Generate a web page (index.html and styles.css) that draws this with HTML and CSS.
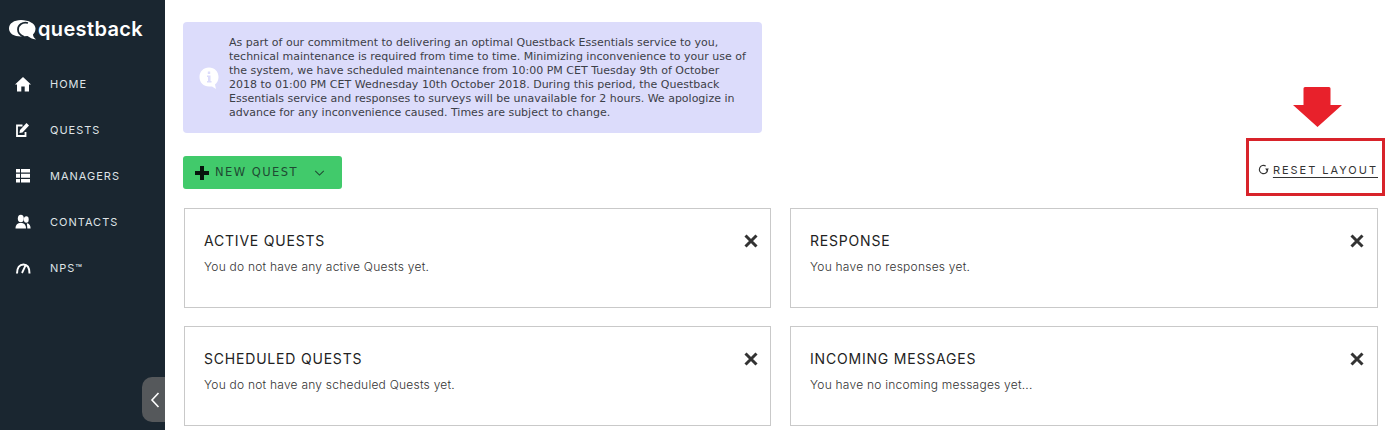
FILE: index.html
```html
<!DOCTYPE html>
<html lang="en">
<head>
<meta charset="utf-8">
<title>Questback</title>
<link rel="stylesheet" href="styles.css">
</head>
<body>
<div class="app">
  <aside class="sidebar">
    <div class="logo">
      <svg class="logo-mark" viewBox="0 0 28 20" width="28" height="20"><path fill="#fff" d="M12 0C5 0 0 3.500 0 8.500 0 13.500 5 16.500 12 16.500 14 16.500 16.500 16.200 18.500 16 20.500 17.500 23.500 19 27 19.500 25 18 24.200 16.500 24 14.500 25.500 13 26.500 11 26.500 8.500 26.500 3.500 19.500 0 12 0Z"/><path fill="none" stroke="#1a2630" stroke-width="1.800" d="M19 3C13.500 1.500 9 5 9 9.500 9 13 11.500 15.500 15 16.800"/></svg>
      <span class="logo-text">questback</span>
    </div>
    <nav class="nav">
      <a class="nav-item"><svg class="nav-icon" viewBox="0 0 16 16"><path fill="#fff" d="M8 1 16 8.500H14V15.500H9.700V10.500H6.300V15.500H2V8.500H0Z"/></svg><span>HOME</span></a>
      <a class="nav-item"><svg class="nav-icon" viewBox="0 0 16 16"><path fill="none" stroke="#fff" stroke-width="1.800" d="M10.500 10V14H2V3.500H7.500"/><path fill="#fff" d="M11.500 1 14 3.500 7.500 10.500 4.500 11 5 8Z"/></svg><span>QUESTS</span></a>
      <a class="nav-item"><svg class="nav-icon" viewBox="0 0 16 16"><path fill="#fff" d="M1 1H5V4.500H1ZM6 1H15V4.500H6ZM1 5.800H5V9.700H1ZM6 5.800H15V9.700H6ZM1 11H5V14.500H1ZM6 11H15V14.500H6Z"/></svg><span>MANAGERS</span></a>
      <a class="nav-item"><svg class="nav-icon" viewBox="0 0 16 16"><ellipse fill="#fff" cx="5.800" cy="4.500" rx="3" ry="3.800"/><path fill="#fff" d="M.5 14.500C.5 10.800 2.500 9 5.800 9S11 10.800 11 14.500Z"/><ellipse fill="#fff" cx="11.300" cy="5.500" rx="2.400" ry="3.300"/><path fill="#fff" d="M12.300 14.500H15.600C15.600 11.500 14.500 9.800 12 9.300 11.500 9.800 12.300 11.500 12.300 14.500Z"/></svg><span>CONTACTS</span></a>
      <a class="nav-item"><svg class="nav-icon" viewBox="0 0 16 16"><path fill="none" stroke="#fff" stroke-width="2" d="M2 13.500C2 8 4.500 4.500 8.500 4.500S14.500 8 14.500 13.500"/><path fill="none" stroke="#fff" stroke-width="1.800" d="M7 13 10.500 5.500"/></svg><span>NPS™</span></a>
    </nav>
    <button class="collapse" aria-label="Collapse"><svg viewBox="0 0 10 18" width="10" height="18"><path fill="none" stroke="#fff" stroke-width="1.600" d="M8.500 2 2 9 8.500 16"/></svg></button>
  </aside>
  <main class="main">
    <section class="notice">
      <svg class="notice-icon" viewBox="0 0 20 22" width="20" height="22"><path fill="#fff" d="M10 .5C4.500.500.500 4.500.500 10S4.500 19.500 10 19.500H13L17 22 16 17.500C18.300 15.800 19.500 13 19.500 10 19.500 4.500 15.500.5 10 .5Z"/><path fill="#dcdcfb" d="M8.800 4.500H11.200V7H8.800ZM8 8.500H11.500V14H12.500V15.500H8V14H9V10H8Z"/></svg>
      <p>As part of our commitment to delivering an optimal Questback Essentials service to you, technical maintenance is required from time to time. Minimizing inconvenience to your use of the system, we have scheduled maintenance from 10:00 PM CET Tuesday 9th of October 2018 to 01:00 PM CET Wednesday 10th October 2018. During this period, the Questback Essentials service and responses to surveys will be unavailable for 2 hours. We apologize in advance for any inconvenience caused. Times are subject to change.</p>
    </section>
    <div class="toolbar">
      <button class="new-quest">
        <svg class="plus" viewBox="0 0 14 14" width="14" height="14"><path fill="#07140d" d="M5 0H9V5H14V9H9V14H5V9H0V5H5Z"/></svg>
        <span>NEW QUEST</span>
        <svg class="chev" viewBox="0 0 12 7" width="11" height="6"><path fill="none" stroke="#1f4a33" stroke-width="1.200" d="M1 1 6 6 11 1"/></svg>
      </button>
      <a class="reset">
        <svg viewBox="0 0 12 12" width="11" height="11"><path fill="none" stroke="#333" stroke-width="1.200" d="M10.500 6A4.500 4.500 0 1 1 8.500 2.300"/><path fill="#333" d="M11.800 5H7.800L9.800 8Z"/></svg>
        <span>RESET LAYOUT</span>
      </a>
    </div>
    <div class="cards">
      <article class="card"><h2>ACTIVE QUESTS</h2><p>You do not have any active Quests yet.</p><svg class="close" viewBox="0 0 14 14" width="14" height="14"><path fill="none" stroke="#333" stroke-width="3" d="M1.500 1.500 12.500 12.500M12.500 1.500 1.500 12.500"/></svg></article>
      <article class="card"><h2>RESPONSE</h2><p>You have no responses yet.</p><svg class="close" viewBox="0 0 14 14" width="14" height="14"><path fill="none" stroke="#333" stroke-width="3" d="M1.500 1.500 12.500 12.500M12.500 1.500 1.500 12.500"/></svg></article>
      <article class="card"><h2>SCHEDULED QUESTS</h2><p>You do not have any scheduled Quests yet.</p><svg class="close" viewBox="0 0 14 14" width="14" height="14"><path fill="none" stroke="#333" stroke-width="3" d="M1.500 1.500 12.500 12.500M12.500 1.500 1.500 12.500"/></svg></article>
      <article class="card"><h2>INCOMING MESSAGES</h2><p>You have no incoming messages yet...</p><svg class="close" viewBox="0 0 14 14" width="14" height="14"><path fill="none" stroke="#333" stroke-width="3" d="M1.500 1.500 12.500 12.500M12.500 1.500 1.500 12.500"/></svg></article>
    </div>
  </main>
  <svg class="arrow" viewBox="0 0 49 40" width="49" height="40"><path fill="#e8212b" d="M12 0H36Q37.500 0 37.500 1.500V18H49L24.500 40 0 18H10.500V1.500Q10.500 0 12 0Z"/></svg>
  <div class="highlight"></div>
</div>
</body>
</html>
```
FILE: styles.css
```css
* { box-sizing: border-box; }
html, body { margin: 0; padding: 0; height: 430px; overflow: hidden; background: #fff; }
body { font-family: "Inter", "Liberation Sans", sans-serif; color: #333; }
.app { position: relative; display: flex; width: 1388px; height: 430px; overflow: hidden; }

.sidebar { position: relative; flex: 0 0 165px; background: #1a2630; }
.logo { display: flex; align-items: center; height: 58px; padding-left: 9px; }
.logo-mark { flex: none; margin: 2px 1px 0 0; }
.logo-text { font-family: "Inter", sans-serif; font-size: 20px; font-weight: 600; color: #fff; line-height: 24px; letter-spacing: 0.350px; }
.nav { display: flex; flex-direction: column; padding-top: 3px; }
.nav-item { display: flex; align-items: center; height: 46px; padding-left: 15px; color: #dfe3e6; font-size: 11px; font-weight: 400; letter-spacing: 1px; }
.nav-icon { width: 16px; height: 16px; flex: none; margin-right: 19px; }
.collapse { position: absolute; right: 0; top: 377px; width: 23px; height: 45px; padding: 0 0 0 3px; border: 0; border-radius: 10px 0 0 10px; background: #55585b; display: flex; align-items: center; justify-content: center; }

.main { flex: 1; min-width: 0; padding: 22px 10px 0 18px; }
.notice { width: 579px; height: 111px; display: flex; align-items: center; background: #dcdcfb; border-radius: 4px; padding: 0 13px 0 16px; }
.notice-icon { flex: none; margin: 0 10px 0 0; }
.notice p { margin: 0; font-family: "DejaVu Sans", sans-serif; font-size: 11px; line-height: 14px; color: #3c4048; }
.toolbar { display: flex; justify-content: space-between; align-items: center; margin-top: 23px; height: 33px; }
.new-quest { display: flex; align-items: center; width: 159px; height: 33px; padding: 0 0 2px 12px; border: 0; border-radius: 3px; background: #41ca6b; font-family: "DejaVu Sans", sans-serif; font-size: 11.500px; letter-spacing: 1.450px; color: #1f4a33; }
.new-quest span { margin-left: 6px; }
.chev { margin-left: 16px; margin-top: 2px; }
.plus { margin-top: 2px; }
.reset { display: flex; align-items: center; gap: 4px; font-size: 11px; letter-spacing: 1.980px; color: #333; margin-top: -6px; }
.reset span { text-decoration: underline; text-underline-offset: 3px; }
.cards { display: grid; grid-template-columns: 587px 588px; column-gap: 19px; row-gap: 18px; margin: 19px 0 0 1px; }
.card { position: relative; height: 100px; padding: 23px 19px 0; border: 1px solid #c9c9c9; }
.card h2 { margin: 0; font-size: 14px; line-height: 17px; font-weight: 400; color: #222; letter-spacing: 0.8px; }
.card p { margin: 10px 0 0; font-size: 12px; line-height: 15px; font-weight: 300; color: #333; letter-spacing: 0.230px; }
.close { position: absolute; top: 25px; right: 12px; }
.card:nth-child(even) .close { right: 13px; }

.arrow { position: absolute; left: 1293px; top: 87px; }
.highlight { position: absolute; left: 1246px; top: 138px; width: 139px; height: 58px; border: 3px solid #d8232a; }
```
